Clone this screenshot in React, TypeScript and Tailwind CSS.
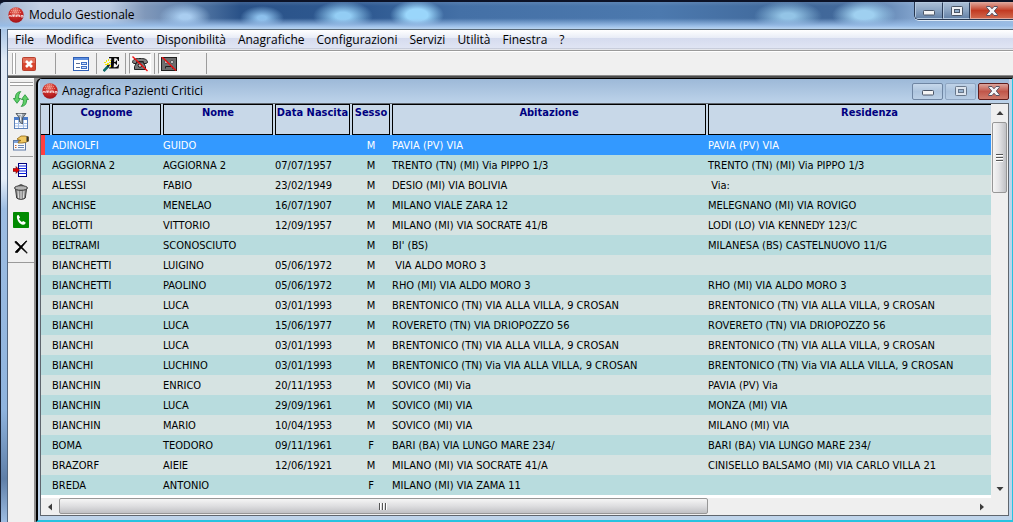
import React from "react";

const menus = ["File", "Modifica", "Evento", "Disponibilità", "Anagrafiche", "Configurazioni", "Servizi", "Utilità", "Finestra", "?"];

const columns = ["Cognome", "Nome", "Data Nascita", "Sesso", "Abitazione", "Residenza"];

const rows: string[][] = [
  ["ADINOLFI", "GUIDO", "", "M", "PAVIA (PV) VIA", "PAVIA (PV) VIA"],
  ["AGGIORNA 2", "AGGIORNA 2", "07/07/1957", "M", "TRENTO (TN) (MI) Via PIPPO 1/3", "TRENTO (TN) (MI) Via PIPPO 1/3"],
  ["ALESSI", "FABIO", "23/02/1949", "M", "DESIO (MI) VIA BOLIVIA", " Via:"],
  ["ANCHISE", "MENELAO", "16/07/1907", "M", "MILANO VIALE ZARA 12", "MELEGNANO (MI) VIA ROVIGO"],
  ["BELOTTI", "VITTORIO", "12/09/1957", "M", "MILANO (MI) VIA SOCRATE 41/B", "LODI (LO) VIA KENNEDY 123/C"],
  ["BELTRAMI", "SCONOSCIUTO", "", "M", "BI' (BS)", "MILANESA (BS) CASTELNUOVO 11/G"],
  ["BIANCHETTI", "LUIGINO", "05/06/1972", "M", " VIA ALDO MORO 3", ""],
  ["BIANCHETTI", "PAOLINO", "05/06/1972", "M", "RHO (MI) VIA ALDO MORO 3", "RHO (MI) VIA ALDO MORO 3"],
  ["BIANCHI", "LUCA", "03/01/1993", "M", "BRENTONICO (TN) VIA ALLA VILLA, 9 CROSAN", "BRENTONICO (TN) VIA ALLA VILLA, 9 CROSAN"],
  ["BIANCHI", "LUCA", "15/06/1977", "M", "ROVERETO (TN) VIA DRIOPOZZO 56", "ROVERETO (TN) VIA DRIOPOZZO 56"],
  ["BIANCHI", "LUCA", "03/01/1993", "M", "BRENTONICO (TN) VIA ALLA VILLA, 9 CROSAN", "BRENTONICO (TN) VIA ALLA VILLA, 9 CROSAN"],
  ["BIANCHI", "LUCHINO", "03/01/1993", "M", "BRENTONICO (TN) Via VIA ALLA VILLA, 9 CROSAN", "BRENTONICO (TN) Via VIA ALLA VILLA, 9 CROSAN"],
  ["BIANCHIN", "ENRICO", "20/11/1953", "M", "SOVICO (MI) Via", "PAVIA (PV) Via"],
  ["BIANCHIN", "LUCA", "29/09/1961", "M", "SOVICO (MI) VIA", "MONZA (MI) VIA"],
  ["BIANCHIN", "MARIO", "10/04/1953", "M", "SOVICO (MI) VIA", "MILANO (MI) VIA"],
  ["BOMA", "TEODORO", "09/11/1961", "F", "BARI (BA) VIA LUNGO MARE 234/", "BARI (BA) VIA LUNGO MARE 234/"],
  ["BRAZORF", "AIEIE", "12/06/1921", "M", "MILANO (MI) VIA SOCRATE 41/A", "CINISELLO BALSAMO (MI) VIA CARLO VILLA 21"],
  ["BREDA", "ANTONIO", "", "F", "MILANO (MI) VIA ZAMA 11", ""],
];

function EmmaLogo() {
  return (
    <svg viewBox="0 0 16 16" className="size-4 shrink-0" aria-hidden="true">
      <defs>
        <radialGradient id="ball" cx="0.45" cy="0.25" r="0.8">
          <stop offset="0" stopColor="#ee8f80" />
          <stop offset="0.45" stopColor="#cf2f2a" />
          <stop offset="1" stopColor="#9c0f16" />
        </radialGradient>
      </defs>
      <circle cx="8" cy="8" r="7.7" fill="url(#ball)" />
      <path d="M3 3.5h10M2 5.5h12M5 1.8h6" stroke="#f2a79a" strokeWidth="0.7" strokeDasharray="1 1" />
      <path d="M1 10V8.6h2V10M4 10V8h1.5v2M5.5 8H7v2M8.5 10V8H10v2M10 8h1.5v2M13 8.5h2V10h-2z" stroke="#fff" strokeWidth="0.7" fill="none" />
    </svg>
  );
}

function MinGlyph() {
  return (
    <svg viewBox="0 0 12 6" className="h-[6px] w-3" aria-hidden="true">
      <rect x="0.5" y="0.5" width="11" height="4.5" rx="0.8" fill="#f4f4f4" stroke="#4a5566" />
    </svg>
  );
}

function MaxGlyph() {
  return (
    <svg viewBox="0 0 12 10" className="h-[10px] w-3" aria-hidden="true">
      <rect x="0.5" y="0.5" width="11" height="9" rx="0.8" fill="#f0f2f5" stroke="#4a5566" />
      <rect x="3.5" y="3.5" width="5" height="3" fill="#8fabc9" stroke="#4a5566" />
    </svg>
  );
}

function CloseGlyph() {
  return (
    <svg viewBox="0 0 12 10" className="h-[10px] w-3" aria-hidden="true">
      <path d="M0.7 0.5h3.3L6 2.8 8 0.5h3.3v1L8.3 5l3 3.5v1H8L6 7.2 4 9.5H0.7v-1l3-3.5-3-3.5z" fill="#f4f4f6" stroke="#4a4a5c" strokeWidth="0.9" />
    </svg>
  );
}

function CloseBoxIcon() {
  return (
    <svg viewBox="0 0 16 16" className="size-4" aria-hidden="true">
      <rect x="1.5" y="1.5" width="13" height="13" rx="1" fill="#d9462f" stroke="#b8402e" />
      <rect x="2" y="2" width="12" height="5" fill="#e98a78" opacity="0.6" />
      <path d="M5 5l6 6M11 5l-6 6" stroke="#fff" strokeWidth="2.6" />
    </svg>
  );
}

function FormIcon() {
  return (
    <svg viewBox="0 0 16 14" className="h-[14px] w-4" aria-hidden="true">
      <rect x="0.5" y="0.5" width="15" height="13" fill="#fff" stroke="#2f5fb5" />
      <rect x="1" y="1" width="14" height="2" fill="#5b8ee0" />
      <path d="M3 6.5h4M3 10.5h4" stroke="#5c6f94" />
      <rect x="8.5" y="5.5" width="5" height="2" fill="#cfe0fa" stroke="#3f6fc5" />
      <rect x="8.5" y="9.5" width="5" height="2" fill="#cfe0fa" stroke="#3f6fc5" />
    </svg>
  );
}

function WandIcon() {
  return (
    <svg viewBox="0 0 17 16" className="h-4 w-[17px]" aria-hidden="true">
      <path d="M6 1h10v4h-1c-.3-1.900-1-2.800-2.500-2.800h-1.300V6c1.200 0 1.700-.5 1.900-1.600h.9v4.400h-.9C12.900 7.700 12.400 7.200 11 7.200l-.4 4H12c1.800 0 2.800-1 3.200-2.800h1L15.500 12.500H6v-1.100h1.500L8.300 2.200H6z" fill="#0a0a0a" />
      <path d="M0.500 15l5-5" stroke="#0c6a68" strokeWidth="2.600" />
      <path d="M4.500 10.500l2-2" stroke="#222" strokeWidth="2" />
      <path d="M1 6h2v1H1zM3 4h1v2H3zM2 8h2v1H2zM6 6h2v1H6zM7 9h1v2H7zM5 3h1v2H5zM4 7h2v2H4zM7 4h1v1H7z" fill="#f0e800" />
    </svg>
  );
}

function PhoneOffIcon() {
  return (
    <svg viewBox="0 0 18 16" className="h-4 w-[18px]" aria-hidden="true">
      <path d="M1.500 6.500C1.500 3 5 2.500 9 2.500s7.500.5 7.500 4l-1.500 1h-2.500V5.500h-7v2H3z" fill="#808080" stroke="#222" />
      <path d="M6 6h6l2.500 4.500v3H3.500v-3z" fill="#777" stroke="#222" />
      <circle cx="9" cy="9.500" r="1.800" fill="#ccc" stroke="#222" />
      <path d="M1.500 0.500l15 14.500" stroke="#f01010" strokeWidth="1.400" />
    </svg>
  );
}

function FaceOffIcon() {
  return (
    <svg viewBox="0 0 16 14" className="h-[14px] w-4" aria-hidden="true">
      <rect x="0.5" y="0.5" width="15" height="13" fill="#6e6e6e" stroke="#222" />
      <circle cx="5" cy="5" r="1.500" fill="#e4e4e4" stroke="#222" strokeWidth="0.6" />
      <circle cx="11" cy="5" r="1.500" fill="#e4e4e4" stroke="#222" strokeWidth="0.6" />
      <path d="M4.500 11.500V9.500h7v2" stroke="#222" fill="none" />
      <path d="M1 0l14 13.500" stroke="#f01010" strokeWidth="1.400" />
    </svg>
  );
}

function RefreshIcon() {
  return (
    <svg viewBox="0 0 16 16" className="size-4" aria-hidden="true">
      <path d="M7.800 0.600C4 0.800 2.300 3.200 2.300 7.500H0.400L4 12.300 7.600 7.500H5.600C5.600 4.500 6 2.300 7.800 0.600z" fill="#5fd068" stroke="#1f8f35" strokeWidth="0.8" />
      <path d="M8.200 15.400c3.800-.2 5.500-2.600 5.500-6.900h1.900L12 3.700 8.400 8.500h2c0 3-.4 5.200-2.200 6.900z" fill="#5fd068" stroke="#1f8f35" strokeWidth="0.8" />
    </svg>
  );
}

function FilterIcon() {
  return (
    <svg viewBox="0 0 16 16" className="size-4" aria-hidden="true">
      <rect x="1.5" y="4.5" width="13" height="11" fill="#fff" stroke="#5a7fb8" />
      <path d="M1 4h14v3H1z" fill="#4b7cc9" />
      <path d="M2 10.5h12M2 13h12M5.5 7v8M10.5 7v8" stroke="#a5c0e8" />
      <path d="M3 0.5h10L9.500 5v6L6.500 9V5z" fill="#9aa3ab" stroke="#434a52" strokeWidth="0.8" />
      <path d="M4.800 1.300h4L7.500 4.500v3" stroke="#eef2f5" fill="none" />
    </svg>
  );
}

function PropertiesIcon() {
  return (
    <svg viewBox="0 0 16 16" className="size-4" aria-hidden="true">
      <rect x="0.5" y="5.5" width="12" height="9.5" fill="#f7faff" stroke="#5d78a5" />
      <path d="M1 6h11v2H1z" fill="#7fa3dd" />
      <path d="M2 10.5h1.500M2 12.500h1.500" stroke="#d06a28" />
      <path d="M5 10.500h6M5 12.500h6" stroke="#6b87b5" />
      <path d="M4 4l4-3h4l3.500 1v4l-3 1.500-3.500.5-4 0 .5-1.500L8 5.500 6 5z" fill="#f0c862" stroke="#8d6412" strokeWidth="0.8" />
      <path d="M13.500 1.500h2v5h-2z" fill="#333" />
    </svg>
  );
}

function InsertIcon() {
  return (
    <svg viewBox="0 0 16 14" className="h-[14px] w-4" aria-hidden="true">
      <rect x="5.5" y="0.5" width="8" height="13" fill="#fff" stroke="#00007c" />
      <path d="M6 3h8M6 5.500h8M6 8h8M6 10.500h8" stroke="#0a20e0" strokeWidth="1.200" />
      <path d="M0 5.500h3V3.500L6.500 7 3 10.500V8.500H0z" fill="#e00000" stroke="#500" strokeWidth="0.5" />
    </svg>
  );
}

function TrashIcon() {
  return (
    <svg viewBox="0 0 16 16" className="size-4" aria-hidden="true">
      <path d="M2.500 5l1.200 9c1.500 1.800 7 1.800 8.600 0l1.200-9z" fill="#8a8a8a" stroke="#3a3a3a" />
      <path d="M5 6.500l.6 7.500M8 7v8M11 6.500l-.6 7.500" stroke="#e2e2e2" />
      <ellipse cx="8" cy="4" rx="6.5" ry="2.3" fill="#b5b5b5" stroke="#3a3a3a" />
      <path d="M5.500 2C6 .3 10 .3 10.500 2" stroke="#3a3a3a" fill="none" />
    </svg>
  );
}

function CallIcon() {
  return (
    <svg viewBox="0 0 16 16" className="size-4" aria-hidden="true">
      <rect width="16" height="16" rx="0.8" fill="#008a00" />
      <path d="M4 3.500l1.600-.6 1.500 2.700-1.100 1.200c.6 1.300 1.500 2.300 2.900 3.100l1.300-1 2.500 1.700c-.3 1.500-1.300 2.300-2.700 2.200C6.800 12.500 3.200 8 4 3.500z" fill="#fff" />
    </svg>
  );
}

function CrossIcon() {
  return (
    <svg viewBox="0 0 14 14" className="size-[14px]" aria-hidden="true">
      <path d="M1 1.500h1.500L13 12.500v.8L11.500 12 1 2.500zM12 1h1L3.500 12.500H1.500v-1z" fill="#000" stroke="#000" strokeWidth="0.7" />
    </svg>
  );
}

function Arrow({ d }: { d: string }) {
  return (
    <svg viewBox="0 0 8 8" className="size-2" aria-hidden="true">
      <path d={d} fill="#3c3c3c" />
    </svg>
  );
}

function SideButton({ label, children }: { label: string; children: React.ReactNode }) {
  return (
    <button type="button" aria-label={label} className="flex size-5 items-center justify-center">
      {children}
    </button>
  );
}

function TitleBar() {
  return (
    <header className="relative flex h-[29px] items-start overflow-hidden rounded-tl-md border-t-2 border-[#0c1226] bg-[#456fa5]">
      <div className="absolute inset-0 bg-[radial-gradient(ellipse_26px_14px_at_185px_15px,#a9cdf0_20%,transparent),radial-gradient(ellipse_22px_12px_at_262px_16px,#8cc0ec_20%,transparent),radial-gradient(ellipse_30px_15px_at_343px_14px,#93cdf4_25%,transparent),radial-gradient(ellipse_27px_15px_at_417px_13px,#9ad6fb_40%,transparent),radial-gradient(ellipse_34px_15px_at_788px_14px,#93c4e6_20%,transparent),radial-gradient(ellipse_32px_15px_at_864px_13px,#9fd0f0_30%,transparent),linear-gradient(90deg,#9fb4d0_0,#c3d0e4_40px,#bccbe2_110px,#8098ba_145px,#5c7fab_190px,#2a5288_240px,#2f5a92_370px,#4470a6_460px,#4c79ae_660px,#3f6799_800px,#43699b_850px,#7d9fc9_910px,#9fbde0_1013px)]" />
      <div className="absolute inset-0 bg-[linear-gradient(180deg,rgba(255,255,255,0.1)_0,transparent_15%,transparent_60%,#98bce6_88%,#b9d4f0_100%)]" />
      <div className="relative flex w-full items-start pl-2">
        <div className="flex items-center gap-[5px] pt-[5px]">
          <EmmaLogo />
          <h1 className="text-[12px] leading-4 text-black">Modulo Gestionale</h1>
        </div>
        <div className="ml-auto flex h-[18px] overflow-hidden rounded-bl-[5px] border-b border-l border-[#26364f] shadow-[0_1px_0_#dbe8f6]">
          <button type="button" aria-label="Riduci a icona" className="flex w-7 items-center justify-center border border-[#b4c8de] border-r-[#2c3d58] bg-gradient-to-b from-[#a9bdd4] via-[#8aa3c1] via-50% to-[#6784a9] pt-1"><MinGlyph /></button>
          <button type="button" aria-label="Ingrandisci" className="flex w-[27px] items-center justify-center border border-[#b4c8de] border-r-[#2c3d58] bg-gradient-to-b from-[#a9bdd4] via-[#8aa3c1] via-50% to-[#6784a9]"><MaxGlyph /></button>
          <button type="button" aria-label="Chiudi" className="flex w-[43px] items-center justify-center border-y border-l border-[#e0a79b] bg-gradient-to-b from-[#dc9c90] via-[#c23a22] via-50% to-[#d0654a]"><CloseGlyph /></button>
        </div>
      </div>
    </header>
  );
}

function MenuBar() {
  return (
    <nav className="h-[22px] border-b border-[#9a9a9a] border-t border-t-[#5a6a78] bg-[linear-gradient(180deg,#ffffff_0,#e9edf7_38%,#d5dbee_39%,#dfe4f3_88%,#b4bbd0_89%,#f4f4f4_100%)]">
      <ul className="flex h-[19px] items-center gap-3 pl-[7px] text-[12px] leading-4 text-black">
        {menus.map((m) => (
          <li key={m}><button type="button" className="block whitespace-nowrap">{m}</button></li>
        ))}
      </ul>
    </nav>
  );
}

function Sep() {
  return <div className="w-px self-stretch bg-[#9c9c9c]" />;
}

function ToolBar() {
  return (
    <div className="flex h-[25px] items-center border-b border-[#8a8a8a] border-t border-t-white bg-[#f0f0f0] py-px pl-1">
      <div className="w-1 self-stretch border-x border-[#a8a8a8] bg-white" />
      <button type="button" aria-label="Chiudi" className="ml-[5px] flex w-4 justify-center"><CloseBoxIcon /></button>
      <div className="ml-[18px] flex items-center self-stretch">
        <Sep />
        <button type="button" aria-label="Modulo" className="ml-[17px] flex w-4 justify-center"><FormIcon /></button>
      </div>
      <div className="ml-[7px] flex items-center self-stretch">
        <Sep />
        <button type="button" aria-label="Nuovo evento" className="ml-1 flex w-5 justify-center"><WandIcon /></button>
      </div>
      <div className="ml-1 flex items-center self-stretch">
        <Sep />
        <button type="button" aria-label="Telefono disattivato" className="ml-[3px] flex h-full w-[22px] items-center justify-center border border-[#9a9a9a] border-b-white border-r-white bg-[#f7f7f7]"><PhoneOffIcon /></button>
      </div>
      <div className="ml-[3px] flex items-center self-stretch">
        <Sep />
        <button type="button" aria-label="Avvisi disattivati" className="ml-[3px] flex h-full w-[22px] items-center justify-center border border-[#9a9a9a] border-b-white border-r-white bg-[#f7f7f7]"><FaceOffIcon /></button>
      </div>
      <div className="ml-[26px] flex self-stretch"><Sep /></div>
    </div>
  );
}

function SideBar() {
  return (
    <aside className="w-7 shrink-0 border-r-2 border-[#8f8f8f] bg-[#f0f0f0]">
      <div className="flex flex-col items-center border-b border-[#9a9a9a] border-t border-t-white pb-[5px] pt-[3px]">
        <div className="mb-[3px] h-1 w-[23px] border-y border-[#a0a0a0] bg-white" />
        <SideButton label="Aggiorna"><RefreshIcon /></SideButton>
        <div className="mt-0.5"><SideButton label="Filtra"><FilterIcon /></SideButton></div>
        <div className="mt-0.5"><SideButton label="Proprietà"><PropertiesIcon /></SideButton></div>
        <div className="my-[3px] h-px w-[23px] bg-[#a0a0a0]" />
        <SideButton label="Inserisci"><InsertIcon /></SideButton>
        <div className="mt-0.5"><SideButton label="Elimina"><TrashIcon /></SideButton></div>
        <div className="mt-2"><SideButton label="Chiama"><CallIcon /></SideButton></div>
        <div className="mt-[7px]"><SideButton label="Annulla"><CrossIcon /></SideButton></div>
      </div>
    </aside>
  );
}

function PatientTable() {
  return (
    <div className="min-w-0 flex-1 overflow-hidden bg-white pb-[3px]">
      <table className="w-[991px] table-fixed border-collapse font-['DejaVu_Sans_Condensed','DejaVu_Sans',sans-serif] text-[11px] leading-[14px]">
        <colgroup>
          <col className="w-[10px]" />
          <col className="w-[111px]" />
          <col className="w-[112px]" />
          <col className="w-[77px]" />
          <col className="w-[40px]" />
          <col className="w-[316px]" />
          <col className="w-[325px]" />
        </colgroup>
        <thead>
          <tr className="h-[31px] bg-[#c8d8e8] text-[#000080]">
            <td className="p-0 pr-px"><div className="h-[31px] border border-l-0 border-black" /></td>
            {columns.map((c) => (
              <th key={c} scope="col" className="p-0 px-px font-bold">
                <div className="flex h-[31px] justify-center whitespace-nowrap border border-black pt-px">{c}</div>
              </th>
            ))}
          </tr>
        </thead>
        <tbody>
          {rows.map((r, i) => (
            <tr key={i} className={i === 0 ? "h-5 bg-[#3399ff] text-white" : "h-5 text-black odd:bg-[#d6e3e2] even:bg-[#b8dcde]"}>
              <td className="p-0">{i === 0 && <div className="h-5 w-1 bg-[#ff4040]" />}</td>
              {r.map((v, j) => (
                <td key={j} className={j === 3 ? "whitespace-pre p-0 pt-0.5 text-center" : "whitespace-pre p-0 pl-px pt-0.5"}>{v}</td>
              ))}
            </tr>
          ))}
        </tbody>
      </table>
    </div>
  );
}

function ChildWindow() {
  return (
    <section className="flex min-w-0 flex-1 flex-col rounded-tl-md border-b-2 border-l-2 border-r border-t border-b-[#28c3e0] border-l-black border-r-[#28c3e0] border-t-black bg-[#bfd4ea] pb-1 pl-[2px] pr-[3px]">
      <div className="flex h-[24px] items-center gap-1 bg-gradient-to-b from-[#9db9d8] to-[#bdd3ea] pl-[2px]">
        <EmmaLogo />
        <h2 className="text-[12px] leading-4 text-black">Anagrafica Pazienti Critici</h2>
        <div className="ml-auto flex gap-[2px]">
          <button type="button" aria-label="Riduci finestra" className="flex h-[17px] w-[31px] items-center justify-center rounded-[2px] border border-[#6f86a3] bg-gradient-to-b from-[#c6d8eb] via-[#aec5de] to-[#bcd0e6] pt-1"><MinGlyph /></button>
          <button type="button" aria-label="Ingrandisci finestra" className="flex h-[17px] w-[31px] items-center justify-center rounded-[2px] border border-[#8fa6c2] bg-gradient-to-b from-[#c0d3e8] via-[#abc3dd] to-[#b6cce4]"><span className="opacity-70"><MaxGlyph /></span></button>
          <button type="button" aria-label="Chiudi finestra" className="flex h-[17px] w-[31px] items-center justify-center rounded-[2px] border border-[#5e1c1c] bg-gradient-to-b from-[#dba49c] via-[#c0564a] to-[#cf7a6c]"><CloseGlyph /></button>
        </div>
      </div>
      <div className="flex flex-col border border-[#5f666e]">
        <div className="flex">
          <PatientTable />
          <div className="flex w-[17px] shrink-0 flex-col items-center bg-[#efefef]">
            <button type="button" aria-label="Scorri in alto" className="flex h-[18px] w-full items-center justify-center"><Arrow d="M0.500 6L4 2l3.500 4z" /></button>
            <div className="flex h-[71px] w-[15px] flex-col items-center justify-center gap-px rounded-[2px] border border-[#979797] bg-gradient-to-r from-[#f5f5f5] via-[#e4e4e6] via-45% to-[#bfc0c4]">
              <div className="h-0.5 w-[7px] border-b border-white bg-[#555]" />
              <div className="h-0.5 w-[7px] border-b border-white bg-[#555]" />
              <div className="h-0.5 w-[7px] border-b border-white bg-[#555]" />
            </div>
            <button type="button" aria-label="Scorri in basso" className="mt-auto flex h-[18px] w-full items-center justify-center"><Arrow d="M0.500 2h7L4 6z" /></button>
          </div>
        </div>
        <div className="flex h-[17px] bg-[#efefef] pr-[17px]">
          <button type="button" aria-label="Scorri a sinistra" className="flex w-[18px] items-center justify-center"><Arrow d="M6 0.500v7L2 4z" /></button>
          <div className="flex-1 pb-px">
            <div className="flex h-4 w-[71%] items-center justify-center gap-px rounded-[2px] border border-[#979797] bg-gradient-to-b from-[#f5f5f5] via-[#dedee0] via-50% to-[#c0c1c4]">
              <div className="h-[7px] w-0.5 border-r border-white bg-[#555]" />
              <div className="h-[7px] w-0.5 border-r border-white bg-[#555]" />
              <div className="h-[7px] w-0.5 border-r border-white bg-[#555]" />
            </div>
          </div>
          <button type="button" aria-label="Scorri a destra" className="flex w-[18px] items-center justify-center"><Arrow d="M2 0.500v7L6 4z" /></button>
        </div>
      </div>
    </section>
  );
}

export default function App() {
  return (
    <div className="flex min-h-screen flex-col bg-[#0c1226] font-['Open_Sans','Noto_Sans',sans-serif]">
      <TitleBar />
      <div className="flex flex-1">
        <div className="w-2 shrink-0 border-l border-r border-l-[#1a2438] border-r-[#51657f] bg-[linear-gradient(180deg,#a9c5e6_0,#dfe9f5_30px,#e6eef8_150px,#9dbde2_180px,#8fb4de_380px,#5f7fa8_450px,#9dbde2_493px)]" />
        <div className="flex min-w-0 flex-1 flex-col">
          <MenuBar />
          <ToolBar />
          <div className="flex flex-1 border-t-2 border-[#4c4c4c] bg-[#8f8f8f]">
            <SideBar />
            <main className="flex min-w-0 flex-1"><ChildWindow /></main>
          </div>
        </div>
      </div>
    </div>
  );
}
